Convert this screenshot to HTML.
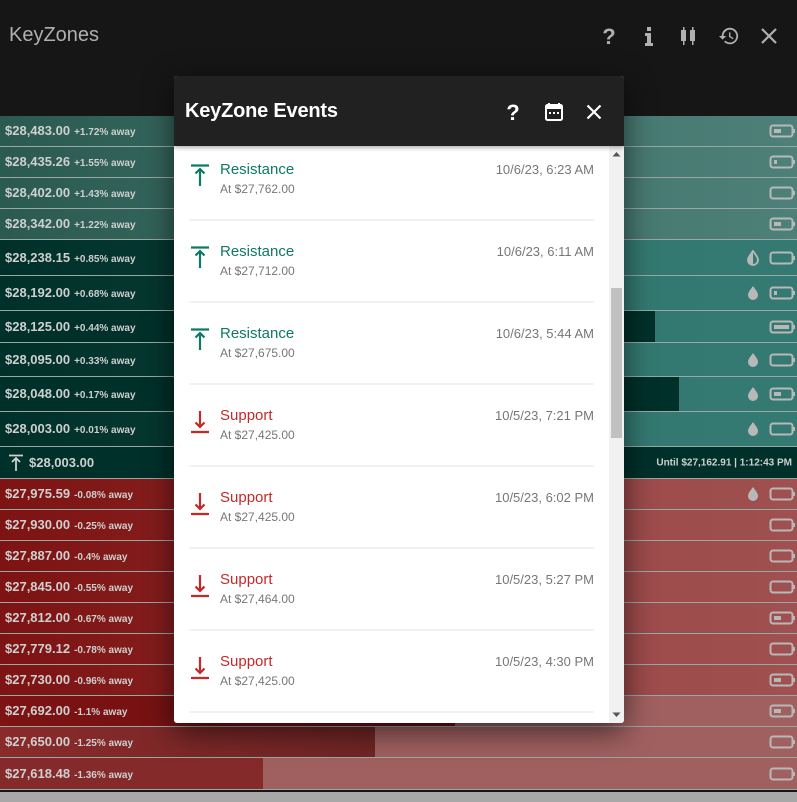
<!DOCTYPE html>
<html><head><meta charset="utf-8"><style>
*{margin:0;padding:0;box-sizing:border-box}
body{width:797px;height:802px;background:#161616;position:relative;overflow:hidden;font-family:"Liberation Sans",sans-serif}
.title{position:absolute;left:9px;top:24px;font-size:20px;color:#b0b0b0}
.ti{position:absolute;top:25px}
.row{position:absolute;left:0;width:797px;border-bottom:1px solid #9aa8a4}
.lg{background:linear-gradient(90deg,#2a5a50,#3f7169 50%,#4d8078)}
.dg{background:linear-gradient(90deg,#00302a,#0a3d35 40%,#327870 60%,#357a72)}
.rd{background:linear-gradient(90deg,#7d1313,#8a2525 40%,#9c4848 70%,#a05050)}
.rl{background:#a06060}
.bar{position:absolute;left:0;top:0;bottom:0}
.lbl{position:absolute;left:5px;top:50%;transform:translateY(-50%);color:#cfcfcf;font-weight:bold;font-family:"Liberation Sans Narrow","Liberation Sans",sans-serif;white-space:nowrap}
.lbl b{font-size:13px}.lbl i{font-style:normal;font-size:10px;margin-left:4px}
.ic{position:absolute;right:2px;top:50%;transform:translateY(-50%);height:14px}
.drop{position:absolute;left:746px;top:50%;transform:translateY(-50%)}
.modal{position:absolute;left:174px;top:76px;width:450px;height:647px;background:#fff;border-radius:3px;overflow:hidden;box-shadow:0 8px 30px rgba(0,0,0,.6)}
.mh{height:70px;background:#212121;position:relative;box-shadow:0 2px 4px rgba(0,0,0,.3);z-index:2}
.mh span{position:absolute;left:11px;top:24px;color:#fff;font-size:20px;font-weight:bold;letter-spacing:-0.2px}
.it{position:absolute;left:15px;width:405px;height:82px;border-bottom:2px solid #f1f1f1}
.it .t{position:absolute;left:31px;top:22px;font-size:15px}
.it .p{position:absolute;left:31px;top:43px;font-size:12px;color:#777}
.it .d{position:absolute;right:0;top:23px;font-size:13px;color:#777}
.it svg{position:absolute;left:2px;top:25px}
.g{color:#0d7a64}.r{color:#c62828}
.sb{position:absolute;left:435px;top:70px;width:15px;height:577px;background:#f1f1f1}
</style></head><body>
<div class="title">KeyZones</div>
<svg class="ti" style="left:600px" width="18" height="22" viewBox="0 0 18 22"><text x="9" y="19" text-anchor="middle" font-size="22" font-weight="bold" fill="#b0b0b0" font-family="Liberation Sans">?</text></svg>
<svg class="ti" style="left:642px" width="14" height="22" viewBox="0 0 14 22"><rect x="5" y="2" width="4" height="4" fill="#b0b0b0"/><path d="M3 8h6v10h2v3H3v-3h2v-7H3z" fill="#b0b0b0"/></svg>
<svg class="ti" style="left:679px" width="18" height="22" viewBox="0 0 18 22"><rect x="2" y="5" width="5" height="11" fill="#b0b0b0"/><rect x="4" y="2" width="1.5" height="18" fill="#b0b0b0"/><rect x="11" y="5" width="5" height="11" fill="#b0b0b0"/><rect x="13" y="2" width="1.5" height="18" fill="#b0b0b0"/></svg>
<svg class="ti" style="left:717px" width="24" height="22" viewBox="0 0 24 24"><path d="M13 3a9 9 0 0 0-9 9H1l4 4 4-4H6a7 7 0 1 1 2 5l-1.4 1.4A9 9 0 1 0 13 3zm-1 5v5l4.3 2.5.7-1.2-3.5-2.1V8z" fill="#b0b0b0"/></svg>
<svg class="ti" style="left:760px;top:27px" width="18" height="18" viewBox="0 0 18 18"><path d="M2 2L16 16M16 2L2 16" stroke="#b0b0b0" stroke-width="2.2"/></svg>

<div class="row lg" style="top:116px;height:31px"><div class="lbl"><b>$28,483.00</b><i>+1.72% away</i></div><svg class="ic" width="26" height="14"><rect x="1.5" y="1.5" width="22" height="11" rx="2.5" fill="none" stroke="#b8b8b8" stroke-width="2"/><rect x="24" y="5" width="2" height="4" fill="#b8b8b8"/><rect x="5" y="5" width="7" height="4" fill="#b8b8b8"/></svg></div>
<div class="row lg" style="top:147px;height:31px"><div class="lbl"><b>$28,435.26</b><i>+1.55% away</i></div><svg class="ic" width="26" height="14"><rect x="1.5" y="1.5" width="22" height="11" rx="2.5" fill="none" stroke="#b8b8b8" stroke-width="2"/><rect x="24" y="5" width="2" height="4" fill="#b8b8b8"/><rect x="5" y="5" width="3" height="4" fill="#b8b8b8"/></svg></div>
<div class="row lg" style="top:178px;height:31px"><div class="lbl"><b>$28,402.00</b><i>+1.43% away</i></div><svg class="ic" width="26" height="14"><rect x="1.5" y="1.5" width="22" height="11" rx="2.5" fill="none" stroke="#b8b8b8" stroke-width="2"/><rect x="24" y="5" width="2" height="4" fill="#b8b8b8"/></svg></div>
<div class="row lg" style="top:209px;height:31px"><div class="lbl"><b>$28,342.00</b><i>+1.22% away</i></div><svg class="ic" width="26" height="14"><rect x="1.5" y="1.5" width="22" height="11" rx="2.5" fill="none" stroke="#b8b8b8" stroke-width="2"/><rect x="24" y="5" width="2" height="4" fill="#b8b8b8"/><rect x="5" y="5" width="7" height="4" fill="#b8b8b8"/></svg></div>

<div class="row dg" style="top:240px;height:36px"><div class="lbl"><b>$28,238.15</b><i>+0.85% away</i></div><svg class="drop" width="14" height="16" viewBox="0 0 14 16"><path d="M7 1C5 4 2 7 2 10a5 5 0 0 0 10 0C12 7 9 4 7 1z" fill="none" stroke="#b8b8b8" stroke-width="1.8"/><path d="M7 1C5 4 2 7 2 10a5 5 0 0 0 5 5z" fill="#b8b8b8"/></svg><svg class="ic" width="26" height="14"><rect x="1.5" y="1.5" width="22" height="11" rx="2.5" fill="none" stroke="#b8b8b8" stroke-width="2"/><rect x="24" y="5" width="2" height="4" fill="#b8b8b8"/></svg></div>
<div class="row dg" style="top:276px;height:35px"><div class="lbl"><b>$28,192.00</b><i>+0.68% away</i></div><svg class="drop" width="14" height="16" viewBox="0 0 14 16"><path d="M7 1C5 4 2 7 2 10a5 5 0 0 0 10 0C12 7 9 4 7 1z" fill="#b8b8b8"/></svg><svg class="ic" width="26" height="14"><rect x="1.5" y="1.5" width="22" height="11" rx="2.5" fill="none" stroke="#b8b8b8" stroke-width="2"/><rect x="24" y="5" width="2" height="4" fill="#b8b8b8"/><rect x="5" y="5" width="3" height="4" fill="#b8b8b8"/></svg></div>
<div class="row dg" style="top:311px;height:32px"><div class="bar" style="width:655px;background:#00302a"></div><div class="lbl"><b>$28,125.00</b><i>+0.44% away</i></div><svg class="ic" width="26" height="14"><rect x="1.5" y="1.5" width="22" height="11" rx="2.5" fill="none" stroke="#b8b8b8" stroke-width="2"/><rect x="24" y="5" width="2" height="4" fill="#b8b8b8"/><rect x="5" y="5" width="15" height="4" fill="#b8b8b8"/></svg></div>
<div class="row dg" style="top:343px;height:34px"><div class="lbl"><b>$28,095.00</b><i>+0.33% away</i></div><svg class="drop" width="14" height="16" viewBox="0 0 14 16"><path d="M7 1C5 4 2 7 2 10a5 5 0 0 0 10 0C12 7 9 4 7 1z" fill="#b8b8b8"/></svg><svg class="ic" width="26" height="14"><rect x="1.5" y="1.5" width="22" height="11" rx="2.5" fill="none" stroke="#b8b8b8" stroke-width="2"/><rect x="24" y="5" width="2" height="4" fill="#b8b8b8"/></svg></div>
<div class="row dg" style="top:377px;height:35px"><div class="bar" style="width:679px;background:#00302a"></div><div class="lbl"><b>$28,048.00</b><i>+0.17% away</i></div><svg class="drop" width="14" height="16" viewBox="0 0 14 16"><path d="M7 1C5 4 2 7 2 10a5 5 0 0 0 10 0C12 7 9 4 7 1z" fill="#b8b8b8"/></svg><svg class="ic" width="26" height="14"><rect x="1.5" y="1.5" width="22" height="11" rx="2.5" fill="none" stroke="#b8b8b8" stroke-width="2"/><rect x="24" y="5" width="2" height="4" fill="#b8b8b8"/><rect x="5" y="5" width="7" height="4" fill="#b8b8b8"/></svg></div>
<div class="row dg" style="top:412px;height:35px"><div class="lbl"><b>$28,003.00</b><i>+0.01% away</i></div><svg class="drop" width="14" height="16" viewBox="0 0 14 16"><path d="M7 1C5 4 2 7 2 10a5 5 0 0 0 10 0C12 7 9 4 7 1z" fill="#b8b8b8"/></svg><svg class="ic" width="26" height="14"><rect x="1.5" y="1.5" width="22" height="11" rx="2.5" fill="none" stroke="#b8b8b8" stroke-width="2"/><rect x="24" y="5" width="2" height="4" fill="#b8b8b8"/></svg></div>

<div class="row" style="top:447px;height:32px;background:#00302a"><svg style="position:absolute;left:8px;top:7px" width="16" height="18" viewBox="0 0 16 18"><path d="M1 1.5h14M8 4v13M4 8l4-4 4 4" stroke="#cfcfcf" stroke-width="1.8" fill="none"/></svg><div class="lbl" style="left:29px"><b>$28,003.00</b></div><div class="lbl" style="left:auto;right:5px;font-size:10px">Until $27,162.91 | 1:12:43 PM</div></div>

<div class="row rd" style="top:479px;height:31px"><div class="lbl"><b>$27,975.59</b><i>-0.08% away</i></div><svg class="drop" width="14" height="16" viewBox="0 0 14 16"><path d="M7 1C5 4 2 7 2 10a5 5 0 0 0 10 0C12 7 9 4 7 1z" fill="#b8b8b8"/></svg><svg class="ic" width="26" height="14"><rect x="1.5" y="1.5" width="22" height="11" rx="2.5" fill="none" stroke="#b8b8b8" stroke-width="2"/><rect x="24" y="5" width="2" height="4" fill="#b8b8b8"/></svg></div>
<div class="row rd" style="top:510px;height:31px"><div class="lbl"><b>$27,930.00</b><i>-0.25% away</i></div><svg class="ic" width="26" height="14"><rect x="1.5" y="1.5" width="22" height="11" rx="2.5" fill="none" stroke="#b8b8b8" stroke-width="2"/><rect x="24" y="5" width="2" height="4" fill="#b8b8b8"/></svg></div>
<div class="row rd" style="top:541px;height:31px"><div class="lbl"><b>$27,887.00</b><i>-0.4% away</i></div><svg class="ic" width="26" height="14"><rect x="1.5" y="1.5" width="22" height="11" rx="2.5" fill="none" stroke="#b8b8b8" stroke-width="2"/><rect x="24" y="5" width="2" height="4" fill="#b8b8b8"/></svg></div>
<div class="row rd" style="top:572px;height:31px"><div class="lbl"><b>$27,845.00</b><i>-0.55% away</i></div><svg class="ic" width="26" height="14"><rect x="1.5" y="1.5" width="22" height="11" rx="2.5" fill="none" stroke="#b8b8b8" stroke-width="2"/><rect x="24" y="5" width="2" height="4" fill="#b8b8b8"/></svg></div>
<div class="row rd" style="top:603px;height:31px"><div class="lbl"><b>$27,812.00</b><i>-0.67% away</i></div><svg class="ic" width="26" height="14"><rect x="1.5" y="1.5" width="22" height="11" rx="2.5" fill="none" stroke="#b8b8b8" stroke-width="2"/><rect x="24" y="5" width="2" height="4" fill="#b8b8b8"/><rect x="5" y="5" width="7" height="4" fill="#b8b8b8"/></svg></div>
<div class="row rd" style="top:634px;height:31px"><div class="lbl"><b>$27,779.12</b><i>-0.78% away</i></div><svg class="ic" width="26" height="14"><rect x="1.5" y="1.5" width="22" height="11" rx="2.5" fill="none" stroke="#b8b8b8" stroke-width="2"/><rect x="24" y="5" width="2" height="4" fill="#b8b8b8"/></svg></div>
<div class="row rd" style="top:665px;height:31px"><div class="lbl"><b>$27,730.00</b><i>-0.96% away</i></div><svg class="ic" width="26" height="14"><rect x="1.5" y="1.5" width="22" height="11" rx="2.5" fill="none" stroke="#b8b8b8" stroke-width="2"/><rect x="24" y="5" width="2" height="4" fill="#b8b8b8"/><rect x="5" y="5" width="7" height="4" fill="#b8b8b8"/></svg></div>
<div class="row rl" style="top:696px;height:31px"><div class="bar" style="width:455px;background:linear-gradient(90deg,#7d1313,#6a1010)"></div><div class="lbl"><b>$27,692.00</b><i>-1.1% away</i></div><svg class="ic" width="26" height="14"><rect x="1.5" y="1.5" width="22" height="11" rx="2.5" fill="none" stroke="#b8b8b8" stroke-width="2"/><rect x="24" y="5" width="2" height="4" fill="#b8b8b8"/><rect x="5" y="5" width="7" height="4" fill="#b8b8b8"/></svg></div>
<div class="row rl" style="top:727px;height:31px"><div class="bar" style="width:375px;background:linear-gradient(90deg,#8a2a2a,#702525)"></div><div class="lbl"><b>$27,650.00</b><i>-1.25% away</i></div><svg class="ic" width="26" height="14"><rect x="1.5" y="1.5" width="22" height="11" rx="2.5" fill="none" stroke="#b8b8b8" stroke-width="2"/><rect x="24" y="5" width="2" height="4" fill="#b8b8b8"/></svg></div>
<div class="row rl" style="top:758px;height:32px"><div class="bar" style="width:263px;background:#852a2a"></div><div class="lbl"><b>$27,618.48</b><i>-1.36% away</i></div><svg class="ic" width="26" height="14"><rect x="1.5" y="1.5" width="22" height="11" rx="2.5" fill="none" stroke="#b8b8b8" stroke-width="2"/><rect x="24" y="5" width="2" height="4" fill="#b8b8b8"/></svg></div>
<div style="position:absolute;left:0;top:792px;width:797px;height:10px;background:#a8a8a8"></div>

<div class="modal">
<div class="mh"><span>KeyZone Events</span>
<svg style="position:absolute;left:331px;top:25px" width="16" height="22"><text x="8" y="19" text-anchor="middle" font-size="22" font-weight="bold" fill="#fff" font-family="Liberation Sans">?</text></svg>
<svg style="position:absolute;left:370px;top:26px" width="20" height="20" viewBox="0 0 20 20"><path d="M5 1v3M15 1v3" stroke="#fff" stroke-width="2"/><rect x="2" y="3" width="16" height="15" rx="1.5" fill="none" stroke="#fff" stroke-width="2"/><rect x="2" y="3" width="16" height="4" fill="#fff"/><rect x="5" y="10" width="2" height="2" fill="#fff"/><rect x="9" y="10" width="2" height="2" fill="#fff"/><rect x="13" y="10" width="2" height="2" fill="#fff"/></svg>
<svg style="position:absolute;left:412px;top:28px" width="16" height="16" viewBox="0 0 16 16"><path d="M1.5 1.5L14.5 14.5M14.5 1.5L1.5 14.5" stroke="#fff" stroke-width="2.2"/></svg>
</div>
<div class="sb"><svg style="position:absolute;left:3px;top:5px" width="9" height="6"><path d="M0.5 5.5L4.5 1l4 4.5z" fill="#555"/></svg><div style="position:absolute;left:2px;top:142px;width:11px;height:150px;background:#c1c1c1"></div><svg style="position:absolute;left:3px;top:566px" width="9" height="6"><path d="M0.5 0.5h8l-4 4.5z" fill="#555"/></svg></div>

<div class="it" style="top:63px"><svg width="18" height="24" viewBox="0 0 18 24"><path d="M0 1.5h18M9 5v17M4.5 9.5L9 5l4.5 4.5" stroke="#0d7a64" stroke-width="2.2" fill="none"/></svg><div class="t g">Resistance</div><div class="p">At $27,762.00</div><div class="d">10/6/23, 6:23 AM</div></div>
<div class="it" style="top:145px"><svg width="18" height="24" viewBox="0 0 18 24"><path d="M0 1.5h18M9 5v17M4.5 9.5L9 5l4.5 4.5" stroke="#0d7a64" stroke-width="2.2" fill="none"/></svg><div class="t g">Resistance</div><div class="p">At $27,712.00</div><div class="d">10/6/23, 6:11 AM</div></div>
<div class="it" style="top:227px"><svg width="18" height="24" viewBox="0 0 18 24"><path d="M0 1.5h18M9 5v17M4.5 9.5L9 5l4.5 4.5" stroke="#0d7a64" stroke-width="2.2" fill="none"/></svg><div class="t g">Resistance</div><div class="p">At $27,675.00</div><div class="d">10/6/23, 5:44 AM</div></div>
<div class="it" style="top:309px"><svg width="18" height="24" viewBox="0 0 18 24"><path d="M9 1v16M4.5 12.5L9 17l4.5-4.5M0 22h18" stroke="#c62828" stroke-width="2.2" fill="none"/></svg><div class="t r">Support</div><div class="p">At $27,425.00</div><div class="d">10/5/23, 7:21 PM</div></div>
<div class="it" style="top:391px"><svg width="18" height="24" viewBox="0 0 18 24"><path d="M9 1v16M4.5 12.5L9 17l4.5-4.5M0 22h18" stroke="#c62828" stroke-width="2.2" fill="none"/></svg><div class="t r">Support</div><div class="p">At $27,425.00</div><div class="d">10/5/23, 6:02 PM</div></div>
<div class="it" style="top:473px"><svg width="18" height="24" viewBox="0 0 18 24"><path d="M9 1v16M4.5 12.5L9 17l4.5-4.5M0 22h18" stroke="#c62828" stroke-width="2.2" fill="none"/></svg><div class="t r">Support</div><div class="p">At $27,464.00</div><div class="d">10/5/23, 5:27 PM</div></div>
<div class="it" style="top:555px"><svg width="18" height="24" viewBox="0 0 18 24"><path d="M9 1v16M4.5 12.5L9 17l4.5-4.5M0 22h18" stroke="#c62828" stroke-width="2.2" fill="none"/></svg><div class="t r">Support</div><div class="p">At $27,425.00</div><div class="d">10/5/23, 4:30 PM</div></div>
</div>
</body></html>
